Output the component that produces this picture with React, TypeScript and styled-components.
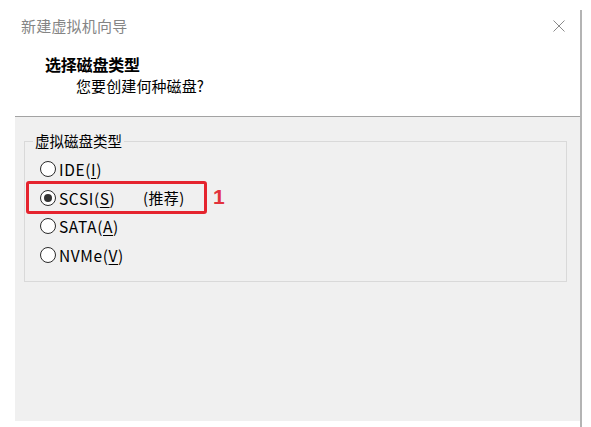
import React from "react";
import styled, { createGlobalStyle } from "styled-components";

const GlobalStyle = createGlobalStyle`
  html, body { margin: 0; padding: 0; background: #ffffff; }
  body {
    font-family: "Noto Sans CJK SC", "Noto Sans", sans-serif;
    color: #000;
  }
  #root { width: 591px; height: 427px; overflow: hidden; }
`;

const Page = styled.div`
  width: 591px;
  height: 427px;
  display: flex;
  flex-direction: row;
  padding-left: 15px;
  box-sizing: border-box;
  background: #ffffff;
`;

const Window = styled.div`
  width: 565px;
  height: 421px;
  display: flex;
  flex-direction: column;
`;

const Edge = styled.div`
  width: 2px;
  margin-top: 10px;
  background: #b4b4b4;
  align-self: stretch;
`;

const Header = styled.div`
  height: 116px;
  background: #ffffff;
  border-bottom: 1px solid #a3a3a3;
  display: flex;
  flex-direction: column;
`;

const TitleRow = styled.div`
  height: 53px;
  display: flex;
  align-items: center;
  justify-content: space-between;
  padding: 0 15px 0 6px;
`;

const WindowTitle = styled.div`
  font-size: 15px;
  line-height: 20px;
  color: #858585;
  letter-spacing: 0.2px;
  margin-top: -1px;
`;

const CloseButton = styled.div`
  width: 12px;
  height: 12px;
  display: flex;
  margin-top: -2px;
`;

const PageTitle = styled.div`
  font-size: 16px;
  font-weight: 700;
  line-height: 22px;
  padding-left: 30px;
  letter-spacing: -0.2px;
`;

const PageSubtitle = styled.div`
  font-size: 15px;
  line-height: 22px;
  padding-left: 61px;
  letter-spacing: 0.1px;
`;

const Body = styled.div`
  flex: 1;
  background: #f0f0f0;
  padding: 15px 13px 0 9px;
`;

const Group = styled.fieldset`
  margin: 0;
  padding: 5px 0 12px 0;
  border: 1px solid #d9d9d9;
  min-width: 0;
`;

const GroupLegend = styled.legend`
  margin-left: 8px;
  padding: 0 2px;
  font-size: 14.5px;
  line-height: 18px;
`;

const RadioList = styled.div`
  display: flex;
  flex-direction: column;
  padding-left: 15px;
`;

const Row = styled.div`
  height: 28.5px;
  display: flex;
  align-items: center;
`;

const Highlight = styled.div`
  box-sizing: border-box;
  width: 181px;
  height: 33px;
  margin: -2.25px 0 -2.25px -14px;
  padding-left: 11px;
  border: 3px solid #e5242e;
  border-radius: 3px;
  display: flex;
  align-items: center;
`;

const Marker = styled.span`
  margin-left: 6px;
  font-family: "Liberation Sans", Arial, sans-serif;
  font-weight: 700;
  font-size: 21px;
  line-height: 22px;
  color: #e2323c;
  margin-top: -2px;
`;

const RadioCircle = styled.span<{ $checked?: boolean }>`
  box-sizing: border-box;
  width: 16px;
  height: 16px;
  border: 1px solid #2b2b2b;
  border-radius: 50%;
  background: #ffffff;
  display: flex;
  align-items: center;
  justify-content: center;
  flex: none;
  &::after {
    content: "";
    display: ${(p) => (p.$checked ? "block" : "none")};
    width: 8px;
    height: 8px;
    border-radius: 50%;
    background: #333333;
  }
`;

const RadioLabel = styled.span<{ $minWidth?: number }>`
  margin-left: 3px;
  font-size: 15.5px;
  line-height: 20px;
  letter-spacing: 0.6px;
  min-width: ${(p) => (p.$minWidth ? `${p.$minWidth}px` : "0")};
  color: #000;
`;

const Mnemonic = styled.u`
  text-decoration: underline;
  text-underline-offset: 2px;
  text-decoration-thickness: 1px;
`;

const Recommend = styled.span`
  font-size: 15px;
  line-height: 20px;
  letter-spacing: 0.4px;
`;

type Option = { name: string; key: string; checked?: boolean };

const options: Option[] = [
  { name: "IDE", key: "I" },
  { name: "SCSI", key: "S", checked: true },
  { name: "SATA", key: "A" },
  { name: "NVMe", key: "V" },
];

function Label({ o, minWidth }: { o: Option; minWidth?: number }) {
  return (
    <RadioLabel $minWidth={minWidth}>
      {o.name}(<Mnemonic>{o.key}</Mnemonic>)
    </RadioLabel>
  );
}

export default function App() {
  return (
    <>
      <GlobalStyle />
      <Page>
        <Window>
          <Header>
            <TitleRow>
              <WindowTitle>新建虚拟机向导</WindowTitle>
              <CloseButton>
                <svg width="12" height="12" viewBox="0 0 12 12">
                  <path d="M0.5 0.5 L11.5 11.5 M11.5 0.5 L0.5 11.5" stroke="#8a8a8a" strokeWidth="1" fill="none" />
                </svg>
              </CloseButton>
            </TitleRow>
            <PageTitle>选择磁盘类型</PageTitle>
            <PageSubtitle>您要创建何种磁盘?</PageSubtitle>
          </Header>
          <Body>
            <Group>
              <GroupLegend>虚拟磁盘类型</GroupLegend>
              <RadioList>
                {options.map((o) =>
                  o.checked ? (
                    <Row key={o.name}>
                      <Highlight>
                        <RadioCircle $checked />
                        <Label o={o} minWidth={84} />
                        <Recommend>(推荐)</Recommend>
                      </Highlight>
                      <Marker>1</Marker>
                    </Row>
                  ) : (
                    <Row key={o.name}>
                      <RadioCircle />
                      <Label o={o} />
                    </Row>
                  )
                )}
              </RadioList>
            </Group>
          </Body>
        </Window>
        <Edge />
      </Page>
    </>
  );
}
